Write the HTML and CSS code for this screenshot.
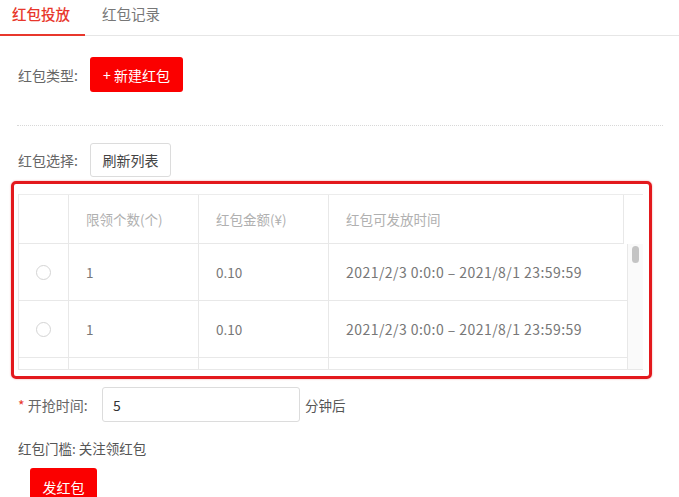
FILE: index.html
```html
<!DOCTYPE html>
<html>

<head>
  <meta charset="utf-8">
  <title>红包投放</title>
  <link rel="stylesheet" href="styles.css">
</head>

<body>

  <div class="tabs">
    <div class="tab active">红包投放</div>
    <div class="tab">红包记录</div>
  </div>

  <div class="form_row first_row">
    <span class="label">红包类型:</span>
    <button class="btn btn_red btn_new">+ 新建红包</button>
  </div>

  <div class="dashed"></div>

  <div class="form_row second_row">
    <span class="label">红包选择:</span>
    <button class="btn btn_plain">刷新列表</button>
  </div>

  <div class="mark_box">
    <div class="table">
      <div class="thead">
        <div class="grid head_row">
          <div class="cell"></div>
          <div class="cell">限领个数(个)</div>
          <div class="cell">红包金额(¥)</div>
          <div class="cell">红包可发放时间</div>
        </div>
      </div>
      <div class="tbody">
        <div class="rows">
          <div class="grid body_row">
            <div class="cell"><span class="radio"></span></div>
            <div class="cell">1</div>
            <div class="cell">0.10</div>
            <div class="cell time">2021/2/3 0:0:0 – 2021/8/1 23:59:59</div>
          </div>
          <div class="grid body_row">
            <div class="cell"><span class="radio"></span></div>
            <div class="cell">1</div>
            <div class="cell">0.10</div>
            <div class="cell time">2021/2/3 0:0:0 – 2021/8/1 23:59:59</div>
          </div>
          <!-- next row is scrolled out of view -->
          <div class="grid body_row">
            <div class="cell"></div>
            <div class="cell"></div>
            <div class="cell"></div>
            <div class="cell"></div>
          </div>
        </div>
        <div class="scrollbar"><div class="thumb"></div></div>
      </div>
    </div>
  </div>

  <div class="form_row third_row">
    <span class="label"><span class="star">*</span> 开抢时间:</span>
    <div class="input">5</div>
    <span class="unit">分钟后</span>
  </div>

  <div class="threshold">红包门槛: 关注领红包</div>

  <button class="btn btn_red btn_send">发红包</button>

</body>

</html>
```

FILE: styles.css
```css
body {
  margin: 0;
  font-family: "Noto Sans CJK SC", "Liberation Sans", sans-serif;
  font-size: 14px;
  color: #666;
  background: #fff;
  overflow: hidden;
}

.tabs {
  display: flex;
  height: 36px;
  border-bottom: 1px solid #e6e6e6;
  box-sizing: border-box;
}

.tab {
  font-size: 14.5px;
  line-height: 20px;
  padding: 4px 0 0 0;
  color: #777;
  margin-left: 17px;
}

.tab.active {
  color: #e8372c;
  font-weight: 500;
  width: 85px;
  margin-left: 0;
  padding-left: 12px;
  box-sizing: border-box;
  border-bottom: 2px solid #e8372c;
  height: 36px;
}

.form_row {
  display: flex;
  align-items: center;
  padding-left: 18px;
}

.label {
  width: 72px;
  color: #666;
}

.first_row {
  margin-top: 21px;
}

.btn {
  font-family: "Noto Sans CJK SC", "Liberation Sans", sans-serif;
  font-size: 14px;
  border-radius: 3px;
  box-sizing: border-box;
  cursor: pointer;
}

.btn_red {
  background: #fb0000;
  color: #fff;
  border: none;
}

.btn_new {
  width: 93px;
  height: 35px;
}

.btn_plain {
  background: #fff;
  color: #444;
  border: 1px solid #dcdcdc;
  width: 81px;
  height: 34px;
}

.dashed {
  margin: 33px 16px 0 17px;
  border-top: 1px dotted #d8d8d8;
}

.second_row {
  margin-top: 17px;
}

.mark_box {
  margin: 4px 0 0 11px;
  width: 641px;
  height: 198px;
  box-sizing: border-box;
  border: 3px solid #e3191d;
  border-radius: 5px;
  box-shadow: 0 0 2px rgba(200, 0, 0, 0.4);
  padding: 10px 0 0 4px;
}

.table {
  width: 625px;
  border-left: 1px solid #e8e8e8;
  border-bottom: 1px solid #e8e8e8;
  box-sizing: border-box;
}

.thead {
  border-top: 1px solid #ececec;
}

.grid {
  display: grid;
  grid-template-columns: 50px 130px 130px 1fr;
}

.head_row {
  width: 605px;
  height: 49px;
  box-sizing: border-box;
  border-bottom: 1px solid #e8e8e8;
}

.cell {
  display: flex;
  align-items: center;
  padding-left: 17px;
  border-right: 1px solid #e8e8e8;
  box-sizing: border-box;
}

.head_row .cell {
  color: #b0b0b0;
  font-size: 13.5px;
}

.tbody {
  display: flex;
  height: 125px;
  overflow: hidden;
}

.rows {
  width: 609px;
}

.body_row {
  height: 57px;
  border-bottom: 1px solid #e8e8e8;
  box-sizing: border-box;
}

.body_row .cell {
  color: #777;
  font-size: 13.5px;
}

.body_row .time {
  font-size: 14px;
  letter-spacing: 0.45px;
}

.body_row .cell:first-child {
  justify-content: center;
  padding-left: 0;
}

.radio {
  width: 15px;
  height: 15px;
  border: 1px solid #d4d4d4;
  border-radius: 50%;
  box-sizing: border-box;
}

.scrollbar {
  width: 15px;
  background: #fafafa;
}

.thumb {
  width: 7px;
  height: 17px;
  margin: 2px 0 0 4px;
  border-radius: 4px;
  background: #c4c4c4;
}

.third_row {
  margin-top: 8px;
}

.star {
  color: #e8372c;
}

.third_row .label {
  width: 84px;
}

.input {
  width: 198px;
  height: 35px;
  box-sizing: border-box;
  border: 1px solid #dcdcdc;
  border-radius: 3px;
  padding-left: 10px;
  display: flex;
  align-items: center;
  color: #333;
  font-size: 14px;
}

.unit {
  margin-left: 5px;
  color: #555;
  font-size: 13.5px;
}

.threshold {
  margin: 16px 0 0 18px;
  color: #555;
  font-size: 13.5px;
}

.btn_send {
  display: block;
  margin: 10px 0 0 30px;
  width: 67px;
  height: 38px;
  font-size: 14px;
}
```
